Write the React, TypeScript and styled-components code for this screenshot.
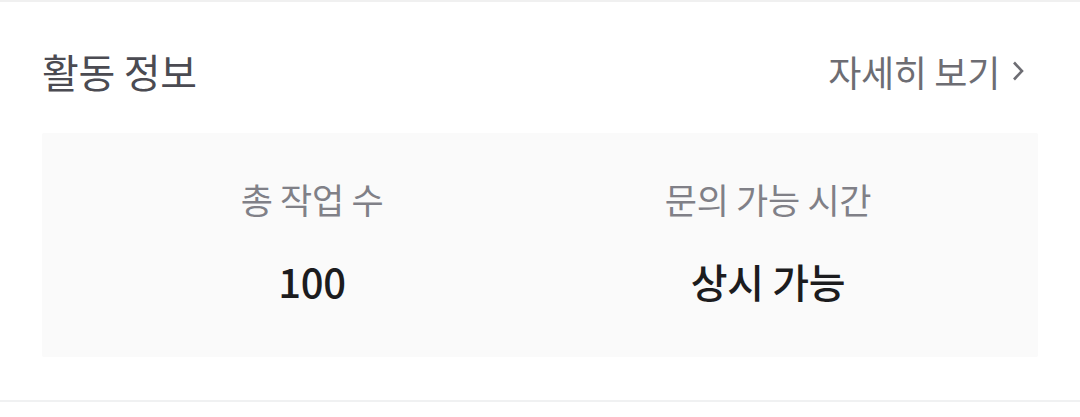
import styled, { createGlobalStyle } from 'styled-components'

const GlobalStyle = createGlobalStyle`
	html, body {
		margin: 0;
		padding: 0;
		background: #ffffff;
		font-family: 'Noto Sans CJK KR', 'Noto Sans', sans-serif;
	}
`

const stats = [
	{ label: '총 작업 수', value: '100' },
	{ label: '문의 가능 시간', value: '상시 가능' },
]

const App = () => {
	return (
		<>
			<GlobalStyle />
			<Section>
				<Header>
					<Title>활동 정보</Title>
					<MoreLink href='#'>
						자세히 보기
						<Chevron viewBox='0 0 12 22' aria-hidden>
							<path d='M2 2.5l8 8.5-8 8.5' />
						</Chevron>
					</MoreLink>
				</Header>
				<StatBox>
					{stats.map(stat => (
						<StatItem key={stat.label}>
							<StatLabel>{stat.label}</StatLabel>
							<StatValue>{stat.value}</StatValue>
						</StatItem>
					))}
				</StatBox>
			</Section>
		</>
	)
}

export default App

const Section = styled.section`
	border-top: 2px solid #f0f0f0;
	border-bottom: 2px solid #f0f1f2;
	padding: 43px 42px 43px;
	background: #fff;
`

const Header = styled.div`
	display: flex;
	align-items: center;
	justify-content: space-between;
	margin-bottom: 36px;
`

const Title = styled.h2`
	margin: 0;
	font-size: 40px;
	font-weight: 400;
	line-height: 1.3;
	color: #4b4b52;
	letter-spacing: -0.3px;
`

const MoreLink = styled.a`
	display: flex;
	align-items: center;
	gap: 12px;
	margin-right: 14px;
	font-size: 36px;
	line-height: 1.3;
	color: #6d6d73;
	text-decoration: none;
	letter-spacing: -0.3px;
`

const Chevron = styled.svg`
	width: 12px;
	height: 22px;
	fill: none;
	stroke: #6d6d73;
	stroke-width: 2.6;
`

const StatBox = styled.div`
	display: grid;
	grid-template-columns: 1fr 1fr;
	padding: 43px 42px 50px;
	background: #fafafa;
	border-radius: 2px;
`

const StatItem = styled.div`
	display: flex;
	flex-direction: column;
	align-items: center;
	gap: 33px;
`

const StatLabel = styled.div`
	font-size: 35px;
	color: #808087;
	line-height: 1.3;
	letter-spacing: -0.3px;
`

const StatValue = styled.div`
	font-size: 40px;
	font-weight: 500;
	color: #1c1c1e;
	line-height: 1.3;
	letter-spacing: -0.3px;
`
